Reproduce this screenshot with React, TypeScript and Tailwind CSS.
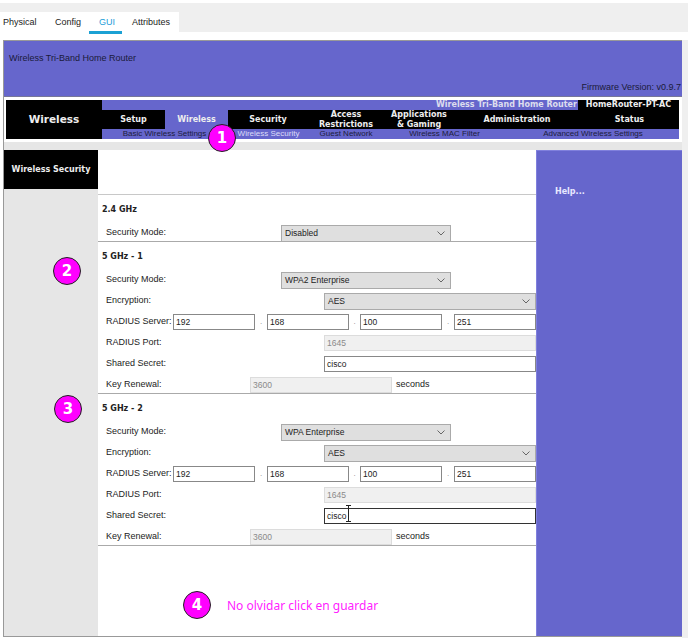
const purple = "bg-[#6666cc]";
const sans = "font-['Liberation_Sans',Arial,sans-serif]";
const bold = "font-['DejaVu_Sans',Verdana,sans-serif] font-bold";

const navTabs = [
  { label: "Setup", w: "w-[63px]" },
  { label: "Wireless", w: "w-[63px]", active: true },
  { label: "Security", w: "w-[80px]" },
  { label: "Access Restrictions", w: "w-[76px]" },
  { label: "Applications & Gaming", w: "w-[70px]" },
  { label: "Administration", w: "w-[126px]" },
  { label: "Status", w: "w-[99px]" },
];

const subTabs = [
  { label: "Basic Wireless Settings", w: "w-[125px]", color: "text-[#1c1c3c]" },
  { label: "Wireless Security", w: "w-[83px]", color: "text-[#dcdcf8]" },
  { label: "Guest Network", w: "w-[72px]", color: "text-[#1c1c3c]" },
  { label: "Wireless MAC Filter", w: "w-[125px]", color: "text-[#1c1c3c]" },
  { label: "Advanced Wireless Settings", w: "w-[172px]", color: "text-[#1c1c3c]" },
];

function Circle({ n, className }: { n: number; className: string }) {
  return (
    <div
      className={`absolute flex h-[28px] w-[28px] items-center justify-center rounded-full border border-[#222] bg-[#ff00ff] text-[15px] leading-none text-white ${bold} ${className}`}
    >
      {n}
    </div>
  );
}

function Select({ value, className }: { value: string; className: string }) {
  return (
    <div
      className={`flex h-[17px] items-center justify-between border border-[#aaaaaa] bg-[#dfdfdf] pl-[3px] pr-[5px] text-[8.5px] text-[#222] ${className}`}
    >
      <span>{value}</span>
      <svg width="8" height="5" viewBox="0 0 8 5" fill="none" stroke="#666" strokeWidth="1">
        <path d="M0.5 0.5 L4 4 L7.5 0.5" />
      </svg>
    </div>
  );
}

function Input({ value, disabled, focus, className }: { value: string; disabled?: boolean; focus?: boolean; className: string }) {
  const tone = disabled
    ? "border-[#dcdcdc] bg-[#f0f0f0] text-[#8a8a8a]"
    : focus
      ? "border-[#333] bg-white text-[#222]"
      : "border-[#888] bg-white text-[#222]";
  return (
    <div className={`flex h-[16px] items-center border px-[2px] text-[8.5px] ${tone} ${className}`}>{value}</div>
  );
}

function Row({ label, w, children }: { label: string; w: string; children: React.ReactNode }) {
  return (
    <div className="flex h-[16px] items-center pl-[8px]">
      <div className={`shrink-0 text-[9px] text-[#222] ${w}`}>{label}</div>
      {children}
    </div>
  );
}

function Dot() {
  return <div className="w-[12px] text-center text-[8px] text-[#888]">.</div>;
}

function Band({ title, children }: { title: string; children: React.ReactNode }) {
  return (
    <div className="border-b border-[#aaaaaa]">
      <div className={`flex h-[30px] items-center pl-[4px] text-[8px] text-[#222] ${bold}`}>{title}</div>
      <div className="flex flex-col gap-[5px]">{children}</div>
    </div>
  );
}

function Radio({ mode, focus }: { mode: string; focus?: boolean }) {
  return (
    <>
      <Row label="Security Mode:" w="w-[175px]">
        <Select value={mode} className="w-[170px]" />
      </Row>
      <Row label="Encryption:" w="w-[218px]">
        <Select value="AES" className="w-[212px]" />
      </Row>
      <Row label="RADIUS Server:" w="w-[67px]">
        <Input value="192" className="w-[82px]" />
        <Dot />
        <Input value="168" className="w-[82px]" />
        <div className="w-[11px] text-center text-[8px] text-[#888]">.</div>
        <Input value="100" className="w-[82px]" />
        <Dot />
        <Input value="251" className="w-[82px]" />
      </Row>
      <Row label="RADIUS Port:" w="w-[218px]">
        <Input value="1645" disabled className="w-[212px]" />
      </Row>
      <Row label="Shared Secret:" w="w-[218px]">
        <Input value="cisco" focus={focus} className="w-[212px]" />
      </Row>
      <Row label="Key Renewal:" w="w-[144px]">
        <Input value="3600" disabled className="w-[142px]" />
        <div className="ml-[4px] text-[9px] text-[#222]">seconds</div>
      </Row>
    </>
  );
}

export default function App() {
  return (
    <div className={`relative h-[638px] w-[688px] overflow-hidden bg-white ${sans}`}>
      <div className="mt-[3px] h-[29px] bg-[#efefef] pt-[9px]">
        <div className="flex h-[20px] w-[179px] items-start bg-white pt-[4px] text-[9px] text-[#222]">
          <div className="ml-[3px] w-[52px]">Physical</div>
          <div className="w-[34px]">Config</div>
          <div className="flex w-[43px] flex-col">
            <div className="pl-[10px] text-[#1a9cd8]">GUI</div>
            <div className="mt-[1px] h-[3px] w-[33px] bg-[#1ba1d4]" />
          </div>
          <div>Attributes</div>
        </div>
      </div>

      <div className="mt-[8px] flex h-[598px] bg-white pl-[3px]">
        <div className="flex h-[597px] w-[679px] flex-col border-y border-l border-[#999999]">
          <div className={`relative h-[56px] shrink-0 border-b border-[#777799] ${purple}`}>
            <div className="pl-[5px] pt-[11px] text-[9px] text-[#1a1a3a]">Wireless Tri-Band Home Router</div>
            <div className="absolute bottom-[2px] right-[1px] text-[9px] text-[#1a1a3a]">Firmware Version: v0.9.7</div>
          </div>

          <div className="flex h-[45px] shrink-0 flex-col bg-white pl-[2px] pr-[3px] pt-[3px]">
            <div className="flex h-[39px] bg-black">
              <div className={`flex w-[96px] shrink-0 items-center justify-center text-[10.5px] text-[#eeeeee] ${bold}`}>
                Wireless
              </div>
              <div className="flex min-w-0 flex-1 flex-col">
                <div className={`flex h-[10px] justify-end ${purple}`}>
                  <div className={`pr-[1px] text-[8px] leading-[10px] text-[#dde] ${bold}`}>Wireless Tri-Band Home Router</div>
                  <div className={`w-[101px] bg-black text-center text-[8px] leading-[10px] text-[#eeeeee] ${bold}`}>HomeRouter-PT-AC</div>
                </div>
                <div className="flex h-[19px]">
                  {navTabs.map((t) => (
                    <div
                      key={t.label}
                      className={`flex shrink-0 items-center justify-center text-center text-[8px] leading-[9.5px] text-[#eeeeee] ${bold} ${t.w} ${t.active ? purple : ""}`}
                    >
                      <span className={t.label.includes(" ") ? "w-[64px]" : ""}>{t.label}</span>
                    </div>
                  ))}
                </div>
                <div className={`flex h-[10px] ${purple}`}>
                  {subTabs.map((t) => (
                    <div key={t.label} className={`shrink-0 text-center text-[8px] leading-[10px] ${t.w} ${t.color}`}>
                      {t.label}
                    </div>
                  ))}
                </div>
              </div>
            </div>
          </div>

          <div className="h-[8px] shrink-0 bg-[#e6e6e6]" />

          <div className="flex min-h-0 flex-1">
            <div className="w-[94px] shrink-0 bg-[#e6e6e6]">
              <div className={`flex h-[39px] items-center justify-center bg-black text-[8px] text-[#eeeeee] ${bold}`}>
                Wireless Security
              </div>
            </div>
            <div className="w-[438px] shrink-0 bg-white">
              <div className="h-[45px] border-b border-[#c8c8c8]" />
              <Band title="2.4 GHz">
                <Row label="Security Mode:" w="w-[175px]">
                  <Select value="Disabled" className="w-[170px]" />
                </Row>
              </Band>
              <Band title="5 GHz - 1">
                <Radio mode="WPA2 Enterprise" />
              </Band>
              <Band title="5 GHz - 2">
                <Radio mode="WPA Enterprise" focus />
              </Band>
              <div className="flex h-[90px] items-end pb-[21px] pl-[129px] font-['Noto_Sans',sans-serif] text-[12px] leading-[18px] text-[#ff22ff]">
                No olvidar click en guardar
              </div>
            </div>
            <div className={`flex-1 border-l border-t border-[#8080dd] pl-[18px] pt-[35px] text-[8px] text-[#e8e8ff] ${purple} ${bold}`}>
              Help...
            </div>
          </div>
        </div>
        <div className="h-full flex-1 bg-[#efefef]" />
      </div>

      <Circle n={1} className="left-[208px] top-[124px]" />
      <Circle n={2} className="left-[53px] top-[257px]" />
      <Circle n={3} className="left-[54px] top-[395px]" />
      <Circle n={4} className="left-[183px] top-[591px]" />

      <svg className="absolute left-[345px] top-[505px]" width="7" height="17" viewBox="0 0 7 17" fill="none" stroke="#222" strokeWidth="1">
        <path d="M1 0.5 H6 M3.5 0.5 V16 M1 16.5 H6" />
      </svg>
    </div>
  );
}
